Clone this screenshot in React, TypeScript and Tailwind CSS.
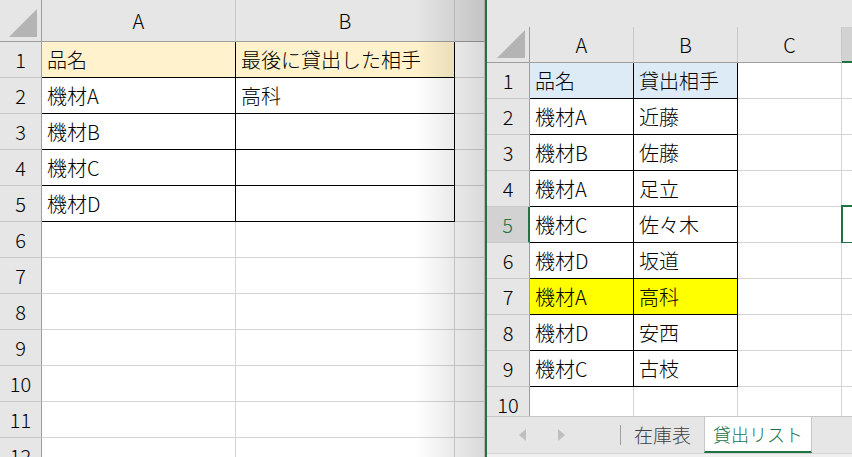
import React from 'react';

const FONT = "font-['Noto_Sans_CJK_JP',sans-serif]";
const GREEN = 'text-[#217346]';

type Cell = { text: string; table?: boolean; fill?: string };

function HeaderCell({ label, w, active }: { label: string; w: string; active?: boolean }) {
  return (
    <div
      className={`${w} flex shrink-0 items-center justify-center border-r border-[#c8c8c8] text-[20px] ${
        active ? 'border-b-2 border-b-[#217346] bg-[#d2d2d2]' : 'border-b border-b-[#9e9e9e] bg-[#e6e6e6]'
      }`}
    >
      {label}
    </div>
  );
}

function Corner({ w }: { w: string }) {
  return (
    <div className={`${w} relative shrink-0 border-r border-b border-[#9e9e9e] bg-[#e6e6e6]`}>
      <svg className="absolute right-[4px] bottom-[4px]" width="28" height="28" viewBox="0 0 28 28">
        <polygon points="28,0 28,28 0,28" fill="#b4b4b4" />
      </svg>
    </div>
  );
}

function RowHead({ n, w, active }: { n: number; w: string; active?: boolean }) {
  return (
    <div
      className={`${w} flex shrink-0 items-center justify-center border-b border-b-[#c8c8c8] text-[20px] ${
        active ? `border-r-2 border-r-[#217346] bg-[#d2d2d2] ${GREEN}` : 'border-r border-r-[#9e9e9e] bg-[#e6e6e6]'
      }`}
    >
      {n}
    </div>
  );
}

function DataCell({ c, w, selected }: { c: Cell; w: string; selected?: boolean }) {
  return (
    <div
      className={`${w} relative flex shrink-0 items-center border-r border-b pl-[5px] pt-[1px] text-[20px] whitespace-nowrap ${
        c.table ? 'border-black' : 'border-[#d4d4d4]'
      } ${c.fill ?? 'bg-white'}`}
    >
      {c.text}
      {selected && (
        <div className="absolute -top-[2px] -left-px h-[39px] w-[20px] border-2 border-[#217346]" />
      )}
    </div>
  );
}

function LeftSheet() {
  const widths = ['w-[194px]', 'w-[219px]', 'w-[30px]'];
  const table: string[][] = [
    ['品名', '最後に貸出した相手'],
    ['機材A', '高科'],
    ['機材B', ''],
    ['機材C', ''],
    ['機材D', ''],
  ];
  const rows = Array.from({ length: 12 }, (_, i) => i + 1);
  return (
    <div className="relative h-[457px] w-[485px] shrink-0 overflow-hidden bg-white">
      <div className="flex h-[42px]">
        <Corner w="w-[42px]" />
        <HeaderCell label="A" w={widths[0]} />
        <HeaderCell label="B" w={widths[1]} />
        <HeaderCell label="" w={widths[2]} />
      </div>
      {rows.map((r) => {
        const t = table[r - 1];
        const cells: Cell[] = [
          { text: t ? t[0] : '', table: !!t, fill: r === 1 ? 'bg-[#fff2cc]' : undefined },
          { text: t ? t[1] : '', table: !!t, fill: r === 1 ? 'bg-[#fff2cc]' : undefined },
          { text: '' },
        ];
        return (
          <div key={r} className="flex h-[36px]">
            <RowHead n={r} w="w-[42px]" />
            {cells.map((c, i) => (
              <DataCell key={i} c={c} w={widths[i]} />
            ))}
          </div>
        );
      })}
      {/* shadow cast by the window on the right */}
      <div className="pointer-events-none absolute top-0 right-0 h-full w-[70px] bg-gradient-to-r from-transparent to-black/15" />
    </div>
  );
}

function TabBar() {
  return (
    <div className="flex h-[37px] shrink-0 border-t border-[#c6c6c6] bg-[#e6e6e6] text-[19px]">
      <div className="flex w-[133px] items-center gap-[32px] pl-[32px]">
        <svg width="7" height="12" viewBox="0 0 7 12">
          <polygon points="7,0 7,12 0,6" fill="#bfbfbf" />
        </svg>
        <svg width="7" height="12" viewBox="0 0 7 12">
          <polygon points="0,0 0,12 7,6" fill="#bfbfbf" />
        </svg>
      </div>
      <div className="my-[8px] w-px bg-[#9e9e9e]" />
      <div className="flex w-[83px] items-center justify-center text-[#404040]">在庫表</div>
      <div
        className={`-mt-px flex w-[108px] items-center justify-center border-x border-t border-[#c6c6c6] border-b-2 border-b-[#217346] bg-white text-[18px] ${GREEN}`}
      >
        貸出リスト
      </div>
    </div>
  );
}

function RightSheet() {
  const widths = ['w-[104px]', 'w-[104px]', 'w-[104px]', 'w-[20px]'];
  const table: string[][] = [
    ['品名', '貸出相手'],
    ['機材A', '近藤'],
    ['機材B', '佐藤'],
    ['機材A', '足立'],
    ['機材C', '佐々木'],
    ['機材D', '坂道'],
    ['機材A', '高科'],
    ['機材D', '安西'],
    ['機材C', '古枝'],
  ];
  const rows = Array.from({ length: 10 }, (_, i) => i + 1);
  return (
    <div className="flex h-[457px] flex-1 flex-col overflow-hidden bg-[#e6e6e6]">
      <div className="min-h-0 flex-1 overflow-hidden">
        <div className="h-[27px]" />
        <div className="flex h-[36px]">
          <Corner w="w-[43px]" />
          <HeaderCell label="A" w={widths[0]} />
          <HeaderCell label="B" w={widths[1]} />
          <HeaderCell label="C" w={widths[2]} />
          <HeaderCell label="" w={widths[3]} active />
        </div>
        {rows.map((r) => {
          const t = table[r - 1];
          const fill = r === 1 ? 'bg-[#ddebf7]' : r === 7 ? 'bg-[#ffff00]' : undefined;
          const cells: Cell[] = [
            { text: t ? t[0] : '', table: !!t, fill },
            { text: t ? t[1] : '', table: !!t, fill },
            { text: '' },
            { text: '' },
          ];
          return (
            <div key={r} className="flex h-[36px]">
              <RowHead n={r} w="w-[43px]" active={r === 5} />
              {cells.map((c, i) => (
                <DataCell key={i} c={c} w={widths[i]} selected={r === 5 && i === 3} />
              ))}
            </div>
          );
        })}
      </div>
      <TabBar />
      <div className="h-[4px] shrink-0 border-t border-[#d4d4d4] bg-[#f0f0f0]" />
    </div>
  );
}

export default function App() {
  return (
    <div className={`flex h-[457px] w-[852px] overflow-hidden bg-white font-light text-black ${FONT}`}>
      <LeftSheet />
      <div className="w-[2px] shrink-0 bg-[#217346]" />
      <RightSheet />
    </div>
  );
}
